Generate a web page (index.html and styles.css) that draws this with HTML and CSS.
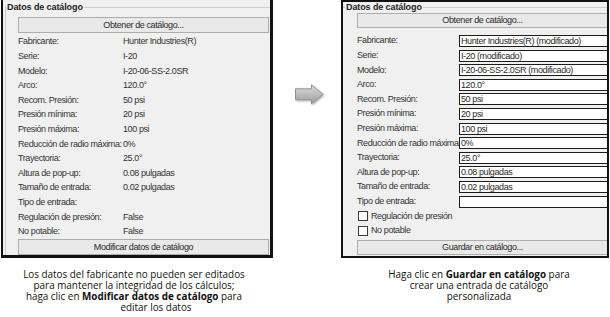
FILE: index.html
```html
<!DOCTYPE html>
<html lang="es">
<head>
<meta charset="utf-8">
<title>Datos de catálogo</title>
<link rel="stylesheet" href="styles.css">
</head>
<body>
<div class="stage">
  <div class="col col-a">
    <div class="panel panel-a">
      <fieldset class="group group-a">
        <legend class="legend legend-a">Datos de catálogo</legend>
        <div class="inner inner-a">
          <div class="btn btn-a btn-top-a">Obtener de catálogo...</div>
          <div class="rows rows-a">
            <div class="row"><span class="lbl lbl-a">Fabricante:</span><span class="val">Hunter Industries(R)</span></div>
            <div class="row"><span class="lbl lbl-a">Serie:</span><span class="val">I-20</span></div>
            <div class="row"><span class="lbl lbl-a">Modelo:</span><span class="val">I-20-06-SS-2.0SR</span></div>
            <div class="row"><span class="lbl lbl-a">Arco:</span><span class="val">120.0°</span></div>
            <div class="row"><span class="lbl lbl-a">Recom. Presión:</span><span class="val">50 psi</span></div>
            <div class="row"><span class="lbl lbl-a">Presión mínima:</span><span class="val">20 psi</span></div>
            <div class="row"><span class="lbl lbl-a">Presión máxima:</span><span class="val">100 psi</span></div>
            <div class="row"><span class="lbl lbl-a">Reducción de radio máxima:</span><span class="val">0%</span></div>
            <div class="row"><span class="lbl lbl-a">Trayectoria:</span><span class="val">25.0°</span></div>
            <div class="row"><span class="lbl lbl-a">Altura de pop-up:</span><span class="val">0.08 pulgadas</span></div>
            <div class="row"><span class="lbl lbl-a">Tamaño de entrada:</span><span class="val">0.02 pulgadas</span></div>
            <div class="row"><span class="lbl lbl-a">Tipo de entrada:</span><span class="val"></span></div>
            <div class="row"><span class="lbl lbl-a">Regulación de presión:</span><span class="val">False</span></div>
            <div class="row"><span class="lbl lbl-a">No potable:</span><span class="val">False</span></div>
          </div>
          <div class="btn btn-a">Modificar datos de catálogo</div>
        </div>
      </fieldset>
    </div>
    <p class="caption caption-a">Los datos del fabricante no pueden ser editados<br>para mantener la integridad de los cálculos;<br>haga clic en <b>Modificar datos de catálogo</b> para<br><span class="last-a">editar los datos</span></p>
  </div>

  <div class="arrow-col">
    <svg class="arrow" width="30" height="22" viewBox="0 0 30 22">
      <defs>
        <linearGradient id="ag" x1="0" y1="0" x2="0" y2="1">
          <stop offset="0" stop-color="#d9d9d9"/>
          <stop offset="0.5" stop-color="#bdbdbd"/>
          <stop offset="1" stop-color="#9c9c9c"/>
        </linearGradient>
        <filter id="sh" x="-20%" y="-20%" width="140%" height="150%">
          <feGaussianBlur in="SourceAlpha" stdDeviation="0.8"/>
          <feOffset dx="0.5" dy="1" result="b"/>
          <feComponentTransfer><feFuncA type="linear" slope="0.35"/></feComponentTransfer>
          <feMerge><feMergeNode/><feMergeNode in="SourceGraphic"/></feMerge>
        </filter>
      </defs>
      <path d="M0.5 4.8 H16.5 V0.8 L28 10.3 L16.5 19.8 V15.8 H0.5 Z" fill="url(#ag)" stroke="#8a8a8a" stroke-width="0.9" stroke-linejoin="round" filter="url(#sh)"/>
    </svg>
  </div>

  <div class="col col-b">
    <div class="panel panel-b">
      <fieldset class="group group-b">
        <legend class="legend legend-b">Datos de catálogo</legend>
        <div class="inner inner-b">
          <div class="btn btn-b btn-top-b">Obtener de catálogo...</div>
          <div class="rows rows-b">
            <div class="row"><span class="lbl lbl-b">Fabricante:</span><span class="box">Hunter Industries(R) (modificado)</span></div>
            <div class="row"><span class="lbl lbl-b">Serie:</span><span class="box">I-20 (modificado)</span></div>
            <div class="row"><span class="lbl lbl-b">Modelo:</span><span class="box">I-20-06-SS-2.0SR (modificado)</span></div>
            <div class="row"><span class="lbl lbl-b">Arco:</span><span class="box">120.0°</span></div>
            <div class="row"><span class="lbl lbl-b">Recom. Presión:</span><span class="box">50 psi</span></div>
            <div class="row"><span class="lbl lbl-b">Presión mínima:</span><span class="box">20 psi</span></div>
            <div class="row"><span class="lbl lbl-b">Presión máxima:</span><span class="box">100 psi</span></div>
            <div class="row"><span class="lbl lbl-b">Reducción de radio máxima:</span><span class="box">0%</span></div>
            <div class="row"><span class="lbl lbl-b">Trayectoria:</span><span class="box">25.0°</span></div>
            <div class="row"><span class="lbl lbl-b">Altura de pop-up:</span><span class="box">0.08 pulgadas</span></div>
            <div class="row"><span class="lbl lbl-b">Tamaño de entrada:</span><span class="box">0.02 pulgadas</span></div>
            <div class="row"><span class="lbl lbl-b">Tipo de entrada:</span><span class="box"></span></div>
            <div class="row"><span class="chk"></span><span class="chk-lbl">Regulación de presión</span></div>
            <div class="row"><span class="chk"></span><span class="chk-lbl">No potable</span></div>
          </div>
          <div class="btn btn-b btn-bottom-b">Guardar en catálogo...</div>
        </div>
      </fieldset>
    </div>
    <p class="caption caption-b">Haga clic en <b>Guardar en catálogo</b> para<br>crear una entrada de catálogo<br>personalizada</p>
  </div>
</div>
</body>
</html>
```

FILE: styles.css
```css
* { box-sizing: border-box; }

html, body {
  margin: 0;
  padding: 0;
  background: #ffffff;
}

body {
  width: 610px;
  height: 317px;
  overflow: hidden;
}

.stage {
  display: flex;
  align-items: flex-start;
}

.col {
  display: flex;
  flex-direction: column;
}

.col-a { width: 273px; }
.col-b { width: 268px; }

.arrow-col {
  width: 68px;
  padding: 84px 0 0 22px;
}

.arrow { display: block; }

.panel {
  background: #f0f0f0;
  overflow: hidden;
  font-family: "Liberation Sans", Arial, sans-serif;
  font-size: 9px;
  letter-spacing: -0.4px;
  line-height: 1;
  color: #333333;
}

.panel-a {
  margin-left: 1px;
  width: 272px;
  height: 258px;
  border-left: 2px solid #111;
  border-right: 3px solid #111;
  border-bottom: 3px solid #111;
}

.panel-b {
  width: 268px;
  height: 258px;
  border: 2px solid #111;
}

.group {
  margin: 0;
  padding: 0;
  min-width: 0;
  border: none;
  border-top: 1px solid #cdcdcd;
}

.group-a {
  margin-left: 2px;
  border-left: 1px solid #cdcdcd;
}

.legend {
  padding: 0 1px;
  font-weight: bold;
  letter-spacing: -0.1px;
  color: #222222;
  white-space: nowrap;
}

.legend-a { line-height: 14px; }
.legend-b { line-height: 10px; margin-left: 2px; }

.inner-a { padding: 3px 1px 0 12px; }
.inner-b { padding: 1px 0 0 14px; }

.btn {
  display: flex;
  align-items: center;
  justify-content: center;
  border: 1px solid #adadad;
  background: #e9e9e9;
  color: #2a2a2a;
  white-space: nowrap;
}

.btn-a { height: 16px; }
.btn-b { height: 15px; margin-right: -1px; }

.rows-a { margin-top: 1.7px; }
.rows-b { margin-top: 5.7px; }
.btn-bottom-b { margin-top: 1.9px; }

.row {
  height: 14.6px;
  display: flex;
  align-items: center;
  white-space: nowrap;
}

.lbl-a { width: 105px; flex: none; }
.lbl-b { width: 102px; flex: none; }

.box {
  flex: 1;
  height: 12px;
  margin-right: -2px;
  border: 1px solid #1c1c1c;
  background: #ffffff;
  padding-left: 1px;
  line-height: 10px;
  color: #2a2a2a;
}

.chk {
  width: 10px;
  height: 10px;
  flex: none;
  margin-left: 1px;
  margin-right: 3px;
  border: 1px solid #3a3a3a;
  background: #ffffff;
}

.caption {
  margin: 10.5px 0 0;
  font-family: "Open Sans", "Noto Sans", sans-serif;
  font-size: 9.9px;
  line-height: 11px;
  text-align: center;
  color: #111;
}

.caption b { font-weight: bold; }

.caption-a { padding-right: 5px; }
.caption-b { padding-left: 8px; }

.last-a { padding-left: 44px; }
```
